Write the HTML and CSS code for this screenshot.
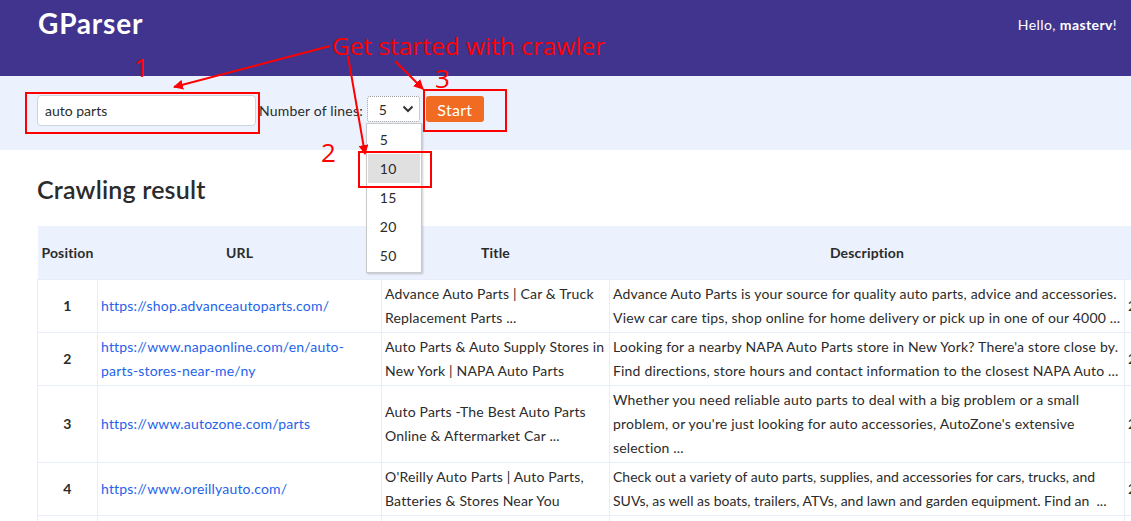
FILE: index.html
```html
<!DOCTYPE html>
<html lang="en">
<head>
<meta charset="utf-8">
<title>GParser</title>
<link rel="stylesheet" href="styles.css">
</head>
<body>
<header class="navbar">
  <div class="brand">GParser</div>
  <div class="hello">Hello, <b>masterv</b>!</div>
</header>

<section class="searchbar">
  <input class="query" type="text" value="auto parts">
  <span class="lines-label">Number of lines:</span>
  <div class="select-wrap">
    <div class="select">
      <span>5</span>
      <svg class="chev" width="12" height="8" viewBox="0 0 12 8"><path d="M1.5 1.5 L6 6 L10.5 1.5" fill="none" stroke="#333" stroke-width="2"/></svg>
    </div>
    <ul class="options">
      <li>5</li>
      <li class="active">10</li>
      <li>15</li>
      <li>20</li>
      <li>50</li>
    </ul>
  </div>
  <button class="start">Start</button>
</section>

<main class="content">
  <h2 class="title">Crawling result</h2>
  <table class="results">
    <colgroup>
      <col class="c-pos"><col class="c-url"><col class="c-title"><col class="c-desc"><col class="c-date">
    </colgroup>
    <thead>
      <tr><th>Position</th><th>URL</th><th>Title</th><th>Description</th><th>Date</th></tr>
    </thead>
    <tbody>
      <tr>
        <td class="pos">1</td>
        <td><a href="#">https://shop.advanceautoparts.com/</a></td>
        <td>Advance Auto Parts | Car &amp; Truck Replacement Parts ...</td>
        <td>Advance Auto Parts is your source for quality auto parts, advice and accessories. View car care tips, shop online for home delivery or pick up in one of our 4000 ...</td>
        <td>2022-11-21</td>
      </tr>
      <tr>
        <td class="pos">2</td>
        <td><a href="#">https://www.napaonline.com/en/auto-parts-stores-near-me/ny</a></td>
        <td>Auto Parts &amp; Auto Supply Stores in New York | NAPA Auto Parts</td>
        <td>Looking for a nearby NAPA Auto Parts store in New York? There'a store close by. Find directions, store hours and contact information to the closest NAPA Auto ...</td>
        <td>2022-11-21</td>
      </tr>
      <tr>
        <td class="pos">3</td>
        <td><a href="#">https://www.autozone.com/parts</a></td>
        <td>Auto Parts -The Best Auto Parts Online &amp; Aftermarket Car ...</td>
        <td>Whether you need reliable auto parts to deal with a big problem or a small problem, or you're just looking for auto accessories, AutoZone's extensive selection ...</td>
        <td>2022-11-21</td>
      </tr>
      <tr>
        <td class="pos">4</td>
        <td><a href="#">https://www.oreillyauto.com/</a></td>
        <td>O'Reilly Auto Parts | Auto Parts, Batteries &amp; Stores Near You</td>
        <td class="tight">Check out a variety of auto parts, supplies, and accessories for cars, trucks, and SUVs, as well as boats, trailers, ATVs, and lawn and garden equipment. <span class="nowrap">Find an &nbsp;...</span></td>
        <td>2022-11-21</td>
      </tr>
      <tr>
        <td class="pos">5</td>
        <td><a href="#">https://www.carparts.com/</a></td>
        <td>CarParts.com | Auto Parts</td>
        <td>Shop for auto parts online.</td>
        <td>2022-11-21</td>
      </tr>
    </tbody>
  </table>
</main>

<div class="annotations">
  <svg class="marks" width="1131" height="200" viewBox="0 0 1131 200">
    <defs>
      <marker id="ah" markerWidth="10" markerHeight="10" refX="9" refY="5" orient="auto" markerUnits="userSpaceOnUse">
        <path d="M0 0 L10 5 L0 10 z" fill="#ff0000"/>
      </marker>
    </defs>
    <g fill="none" stroke="#ff0000" stroke-width="2">
      <rect x="26" y="93" width="233" height="40"/>
      <rect x="424" y="90" width="82" height="41"/>
      <rect x="359" y="152" width="72" height="35"/>
      <line x1="330" y1="46" x2="174" y2="87" marker-end="url(#ah)"/>
      <line x1="348" y1="56" x2="365" y2="154" marker-end="url(#ah)"/>
      <line x1="395" y1="61" x2="423" y2="89" marker-end="url(#ah)"/>
    </g>
  </svg>
  <span class="note note-main">Get started with crawler</span>
  <span class="note num n1">1</span>
  <span class="note num n2">2</span>
  <span class="note num n3">3</span>
</div>
</body>
</html>
```
FILE: styles.css
```css
* { box-sizing: border-box; }
html, body { margin: 0; padding: 0; }
body {
  font-family: "Lato", "Open Sans", sans-serif;
  font-size: 14px;
  letter-spacing: 0.18px;
  color: #2b2b2b;
  background: #fff;
  width: 1131px;
  height: 521px;
  overflow: hidden;
  position: relative;
}

.navbar {
  background: #41348f;
  height: 76px;
  display: flex;
  justify-content: space-between;
  align-items: flex-start;
  padding: 0 14px 0 38px;
  color: #fff;
}
.brand {
  font-size: 28px;
  font-weight: 700;
  letter-spacing: 0.8px;
  line-height: 34px;
  margin-top: 6px;
}
.hello {
  font-size: 14px;
  letter-spacing: 0.4px;
  line-height: 18px;
  margin-top: 16px;
}
.hello b { font-weight: 700; }

.searchbar {
  background: #ebf2fd;
  height: 74px;
  padding: 19px 0 0 37px;
  display: flex;
  align-items: flex-start;
}
.query {
  width: 219px;
  height: 31px;
  border: 1px solid #cfd4da;
  border-radius: 4px;
  background: #fff;
  font: inherit;
  font-size: 14px;
  color: #2b2b2b;
  padding: 0 7px;
  outline: none;
}
.lines-label {
  margin-left: 3px;
  line-height: 31px;
  white-space: nowrap;
}
.select-wrap {
  position: relative;
  margin-left: 4px;
  margin-top: 1px;
}
.select {
  width: 53px;
  height: 26px;
  border: 1px dotted #9a9a9a;
  border-radius: 3px;
  background: #fff;
  display: flex;
  align-items: center;
  justify-content: space-between;
  padding: 0 5px 0 11px;
}
.chev { display: block; }
.options {
  position: absolute;
  left: -1px;
  top: 27px;
  width: 56px;
  margin: 0;
  padding: 1px 0 2px;
  list-style: none;
  background: #fff;
  border: 1px solid #c9c9c9;
  box-shadow: 1px 1px 2px rgba(0,0,0,0.2);
  z-index: 5;
}
.options li {
  height: 29px;
  line-height: 29px;
  padding-left: 12px;
  margin: 0 1px;
}
.options li.active { background: #e0e0e0; }
.start {
  margin-left: 6px;
  margin-top: 1px;
  height: 26px;
  width: 58px;
  border: none;
  border-radius: 3px;
  background: #f26b22;
  color: #fff;
  font: inherit;
  font-size: 16px;
  letter-spacing: 0.3px;
  padding: 0;
}

.content {
  padding: 0 0 0 37px;
}
.title {
  margin: 0;
  padding-top: 24px;
  height: 76px;
  font-size: 25px;
  font-weight: 600;
  line-height: 30px;
  color: #2b2b2b;
}
.results {
  border-collapse: collapse;
  table-layout: fixed;
  width: 1237px;
}
.c-pos { width: 60px; }
.c-url { width: 284px; }
.c-title { width: 228px; }
.c-desc { width: 515px; }
.c-date { width: 150px; }
.results thead th {
  background: #ebf2fd;
  height: 53px;
  font-weight: 700;
  text-align: center;
  padding: 0 3px;
  white-space: nowrap;
}
.results td {
  border: 1px solid #e7eefa;
  padding: 2px 3px;
  line-height: 24px;
  vertical-align: middle;
}
.results td.tight { letter-spacing: 0; }
.nowrap { white-space: nowrap; }
.results td.pos {
  text-align: center;
  font-weight: 700;
}
.results a {
  color: #2563eb;
  text-decoration: none;
}

.annotations {
  position: absolute;
  left: 0;
  top: 0;
  width: 1131px;
  height: 200px;
  pointer-events: none;
  z-index: 10;
}
.marks { position: absolute; left: 0; top: 0; }
.note {
  position: absolute;
  color: #ff0000;
  font-family: "Open Sans", sans-serif;
  letter-spacing: 0;
  line-height: 1;
  white-space: nowrap;
}
.note-main { left: 332px; top: 34px; font-size: 24.4px; }
.num { font-size: 26px; }
.n1 { left: 134px; top: 54px; }
.n2 { left: 321px; top: 139px; }
.n3 { left: 435px; top: 65px; }
```
